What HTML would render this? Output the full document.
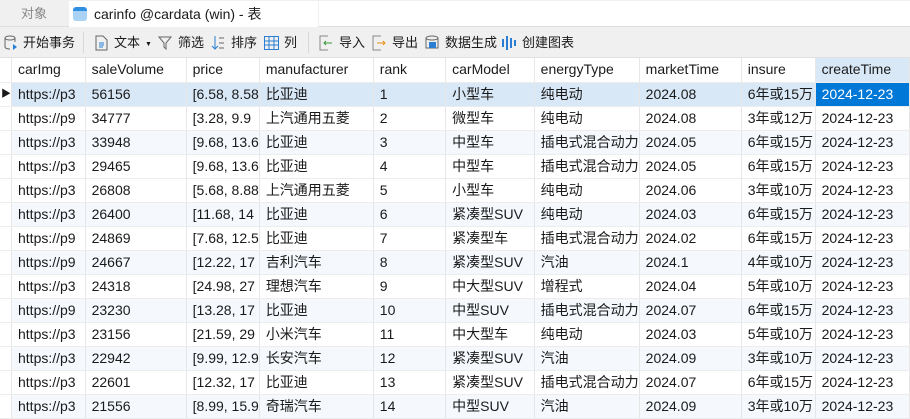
<!DOCTYPE html>
<html><head><meta charset="utf-8"><style>
*{margin:0;padding:0;box-sizing:border-box}
body{width:910px;height:419px;overflow:hidden;background:#fff;font-family:"Liberation Sans","Noto Sans CJK SC",sans-serif;font-size:14px;color:#1a1a1a;position:relative}
.tabs{position:absolute;left:0;top:0;width:910px;height:27px;background:#f0f0f0;border-bottom:1px solid #ddd}
.t1{position:absolute;left:0;top:0;width:68px;height:27px;color:#888;text-align:center;line-height:27px;font-size:13px}
.t2{position:absolute;left:69px;top:1px;width:249px;height:26px;background:#fff;line-height:26px;padding-left:25px;font-size:14px}
.t3{position:absolute;left:319px;top:1px;width:591px;height:25px;background:#fff}
.ic{position:absolute;left:4px;top:6px;width:14px;height:14px;border-radius:3px;background:linear-gradient(#2f8fe0 0 4px,#a9d2f5 4px)}
.tb{position:absolute;left:0;top:27px;width:910px;height:31px;background:#f0f0f0;border-bottom:1px solid #e0e0e0}
.tb span{position:absolute;top:8px;font-size:13px;line-height:16px}
.sep{position:absolute;top:5px;width:1px;height:21px;background:#d8d8d8}
table{position:absolute;left:0;top:58px;border-collapse:collapse;table-layout:fixed}
td{height:24px;border-right:1px solid #e6e6e6;border-bottom:1px solid #ececec;padding-left:6px;white-space:nowrap;overflow:hidden;line-height:23px;vertical-align:top}
tr.h td{background:#fff}
tr.alt td{background:#f5f9fd}
tr.sel td{background:#d9e8f7}
td.ind{padding:0;background:#fff!important}
</style></head><body>
<div class="tabs"><div class="t1">对象</div><div class="t2"><div class="ic"></div>carinfo @cardata (win) - 表</div><div class="t3"></div></div>
<div class="tb">
<svg style="position:absolute;left:4px;top:8px" width="14" height="16"><ellipse cx="6" cy="3" rx="5" ry="2" fill="none" stroke="#666"/><path d="M1 3v9c0 1 2 2 5 2M11 3v4" fill="none" stroke="#666"/><path d="M9 9l4 3-4 3z" fill="#2a7fd4"/></svg>
<span style="left:23px">开始事务</span><div class="sep" style="left:83px"></div>
<svg style="position:absolute;left:95px;top:8px" width="13" height="16"><path d="M1 1h7l4 4v10H1z" fill="none" stroke="#666"/><path d="M4 8h5M4 10h5M4 12h4" stroke="#2a7fd4"/></svg>
<span style="left:114px">文本</span><span style="left:145px;font-size:7px;top:10px">▼</span>
<svg style="position:absolute;left:158px;top:9px" width="14" height="14"><path d="M1 1h12L8 7v6L6 11V7z" fill="none" stroke="#666"/></svg>
<span style="left:178px">筛选</span>
<svg style="position:absolute;left:211px;top:8px" width="14" height="16"><path d="M4 1v13M1 11l3 3 3-3" fill="none" stroke="#2a7fd4"/><path d="M8 3h5M8 8h5M8 13h5" stroke="#666"/></svg>
<span style="left:231px">排序</span>
<svg style="position:absolute;left:264px;top:9px" width="15" height="14"><rect x="0.5" y="0.5" width="14" height="13" fill="none" stroke="#2a7fd4"/><path d="M5 0v14M10 0v14M0 5h15M0 9h15" stroke="#2a7fd4"/></svg>
<span style="left:284px">列</span><div class="sep" style="left:308px"></div>
<svg style="position:absolute;left:319px;top:8px" width="15" height="16"><path d="M9 1H1v14h8" fill="none" stroke="#888"/><path d="M13 8H5M7 6l-2 2 2 2" fill="none" stroke="#3a9a3a"/></svg>
<span style="left:339px">导入</span>
<svg style="position:absolute;left:372px;top:8px" width="15" height="16"><path d="M9 1H1v14h8" fill="none" stroke="#888"/><path d="M5 8h8M11 6l2 2-2 2" fill="none" stroke="#e8900c"/></svg>
<span style="left:392px">导出</span>
<svg style="position:absolute;left:425px;top:8px" width="14" height="16"><ellipse cx="7" cy="3" rx="6" ry="2" fill="none" stroke="#666"/><path d="M1 3v10h12V3" fill="none" stroke="#666"/><rect x="4" y="7" width="7" height="6" fill="#2a7fd4"/></svg>
<span style="left:445px">数据生成</span>
<svg style="position:absolute;left:501px;top:8px" width="16" height="16"><path d="M2 4v8M6 1v14M10 3v10M14 5v6" stroke="#2a7fd4" stroke-width="2"/></svg>
<span style="left:522px">创建图表</span>
</div>
<table>
<colgroup><col width="10"><col width="74"><col width="102"><col width="73"><col width="115"><col width="74"><col width="89"><col width="102"><col width="103"><col width="74"><col width="95"></colgroup>
<tr class="h"><td class="ind"></td><td>carImg</td><td>saleVolume</td><td>price</td><td>manufacturer</td><td>rank</td><td>carModel</td><td>energyType</td><td>marketTime</td><td>insure</td><td style="background:#d9e8f7">createTime</td></tr>
<tr class="sel"><td class="ind" style="font-size:10px;padding-left:1px">▶</td><td>https://p3</td><td>56156</td><td>[6.58, 8.58</td><td>比亚迪</td><td>1</td><td>小型车</td><td>纯电动</td><td>2024.08</td><td>6年或15万</td><td style="background:#0078d7;color:#fff">2024-12-23</td></tr>
<tr><td class="ind"></td><td>https://p9</td><td>34777</td><td>[3.28, 9.9</td><td>上汽通用五菱</td><td>2</td><td>微型车</td><td>纯电动</td><td>2024.08</td><td>3年或12万</td><td>2024-12-23</td></tr>
<tr class="alt"><td class="ind"></td><td>https://p3</td><td>33948</td><td>[9.68, 13.6</td><td>比亚迪</td><td>3</td><td>中型车</td><td>插电式混合动力</td><td>2024.05</td><td>6年或15万</td><td>2024-12-23</td></tr>
<tr><td class="ind"></td><td>https://p3</td><td>29465</td><td>[9.68, 13.6</td><td>比亚迪</td><td>4</td><td>中型车</td><td>插电式混合动力</td><td>2024.05</td><td>6年或15万</td><td>2024-12-23</td></tr>
<tr><td class="ind"></td><td>https://p3</td><td>26808</td><td>[5.68, 8.88</td><td>上汽通用五菱</td><td>5</td><td>小型车</td><td>纯电动</td><td>2024.06</td><td>3年或10万</td><td>2024-12-23</td></tr>
<tr class="alt"><td class="ind"></td><td>https://p3</td><td>26400</td><td>[11.68, 14</td><td>比亚迪</td><td>6</td><td>紧凑型SUV</td><td>纯电动</td><td>2024.03</td><td>6年或15万</td><td>2024-12-23</td></tr>
<tr><td class="ind"></td><td>https://p9</td><td>24869</td><td>[7.68, 12.5</td><td>比亚迪</td><td>7</td><td>紧凑型车</td><td>插电式混合动力</td><td>2024.02</td><td>6年或15万</td><td>2024-12-23</td></tr>
<tr class="alt"><td class="ind"></td><td>https://p9</td><td>24667</td><td>[12.22, 17</td><td>吉利汽车</td><td>8</td><td>紧凑型SUV</td><td>汽油</td><td>2024.1</td><td>4年或10万</td><td>2024-12-23</td></tr>
<tr><td class="ind"></td><td>https://p3</td><td>24318</td><td>[24.98, 27</td><td>理想汽车</td><td>9</td><td>中大型SUV</td><td>增程式</td><td>2024.04</td><td>5年或10万</td><td>2024-12-23</td></tr>
<tr class="alt"><td class="ind"></td><td>https://p9</td><td>23230</td><td>[13.28, 17</td><td>比亚迪</td><td>10</td><td>中型SUV</td><td>插电式混合动力</td><td>2024.07</td><td>6年或15万</td><td>2024-12-23</td></tr>
<tr><td class="ind"></td><td>https://p3</td><td>23156</td><td>[21.59, 29</td><td>小米汽车</td><td>11</td><td>中大型车</td><td>纯电动</td><td>2024.03</td><td>5年或10万</td><td>2024-12-23</td></tr>
<tr class="alt"><td class="ind"></td><td>https://p3</td><td>22942</td><td>[9.99, 12.9</td><td>长安汽车</td><td>12</td><td>紧凑型SUV</td><td>汽油</td><td>2024.09</td><td>3年或10万</td><td>2024-12-23</td></tr>
<tr><td class="ind"></td><td>https://p3</td><td>22601</td><td>[12.32, 17</td><td>比亚迪</td><td>13</td><td>紧凑型SUV</td><td>插电式混合动力</td><td>2024.07</td><td>6年或15万</td><td>2024-12-23</td></tr>
<tr class="alt"><td class="ind"></td><td>https://p3</td><td>21556</td><td>[8.99, 15.9</td><td>奇瑞汽车</td><td>14</td><td>中型SUV</td><td>汽油</td><td>2024.09</td><td>3年或10万</td><td>2024-12-23</td></tr>
</table>
</body></html>
